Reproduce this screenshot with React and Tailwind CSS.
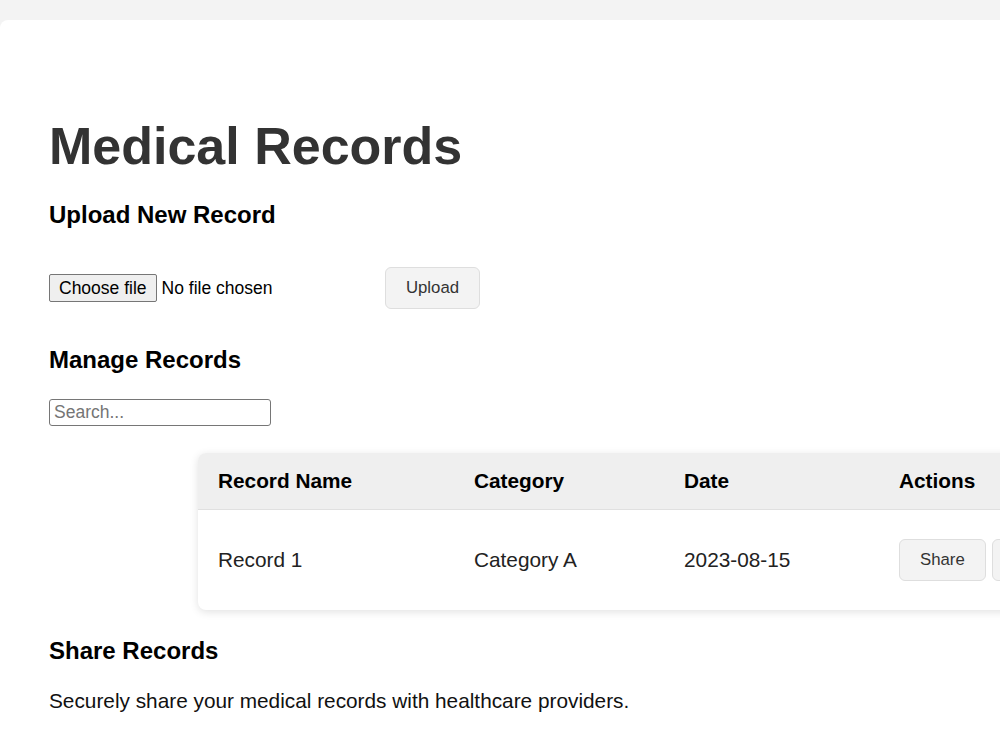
export default function App() {
  return (
    <div className="w-full min-h-[749px] overflow-hidden bg-[#f3f3f3] pt-[20px] font-['Liberation_Sans',Arial,sans-serif]">
      <div className="w-[1200px] min-h-[729px] rounded-tl-[8px] bg-white pl-[49px] pt-[96px] pb-[40px]">
        <h1 className="text-[52px] leading-[60px] font-bold text-[#333]">Medical Records</h1>

        <h2 className="mt-[25px] text-[24px] leading-[28px] font-bold text-black">Upload New Record</h2>
        <div className="mt-[38px] flex items-center h-[42px]">
          <label className="flex w-[326px] items-center text-[17.5px] leading-[20px] text-black cursor-default">
            <input type="file" className="hidden" />
            <span className="mr-[5px] rounded-[2px] border border-[#767676] bg-[#efefef] px-[9px] py-[3px] text-black">Choose file</span>
            <span>No file chosen</span>
          </label>
          <button className="ml-[10px] h-[42px] w-[95px] rounded-[6px] border border-[#dedede] bg-[#f3f3f3] text-[16.8px] leading-[20px] text-[#333]">
            Upload
          </button>
        </div>

        <h2 className="mt-[37px] text-[24px] leading-[28px] font-bold text-black">Manage Records</h2>
        <input
          type="text"
          placeholder="Search..."
          className="mt-[25px] block h-[27px] w-[222px] rounded-[3px] border border-[#767676] px-[4px] text-[17.5px] leading-[20px] text-black placeholder:text-[#757575] outline-none"
        />

        <div className="mt-[27px] ml-[149px] w-[1000px] overflow-hidden rounded-[8px] bg-white shadow-[0_2px_8px_rgba(0,0,0,0.12)]">
          <table className="w-full border-collapse text-[20.8px]">
            <thead>
              <tr className="bg-[#efefef] border-b border-[#e0e0e0]">
                <th className="w-[256px] pl-[20px] py-[16px] text-left font-bold leading-[24px] text-black">Record Name</th>
                <th className="w-[210px] pl-[20px] py-[16px] text-left font-bold leading-[24px] text-black">Category</th>
                <th className="w-[215px] pl-[20px] py-[16px] text-left font-bold leading-[24px] text-black">Date</th>
                <th className="pl-[20px] py-[16px] text-left font-bold leading-[24px] text-black">Actions</th>
              </tr>
            </thead>
            <tbody>
              <tr>
                <td className="pl-[20px] py-[29px] leading-[24px] text-[#222]">Record 1</td>
                <td className="pl-[20px] py-[29px] leading-[24px] text-[#222]">Category A</td>
                <td className="pl-[20px] py-[29px] leading-[24px] text-[#222]">2023-08-15</td>
                <td className="pl-[20px] py-[29px]">
                  <div className="flex gap-[6px]">
                    <button className="h-[42px] px-[20px] rounded-[6px] border border-[#dedede] bg-[#f3f3f3] text-[16.8px] leading-[20px] text-[#333]">Share</button>
                    <button className="h-[42px] px-[20px] rounded-[6px] border border-[#dedede] bg-[#f3f3f3] text-[16.8px] leading-[20px] text-[#333]">Delete</button>
                  </div>
                </td>
              </tr>
            </tbody>
          </table>
        </div>

        <h2 className="mt-[27px] text-[24px] leading-[28px] font-bold text-black">Share Records</h2>
        <p className="mt-[24px] text-[20.8px] leading-[24px] text-[#111]">Securely share your medical records with healthcare providers.</p>
      </div>
    </div>
  );
}
